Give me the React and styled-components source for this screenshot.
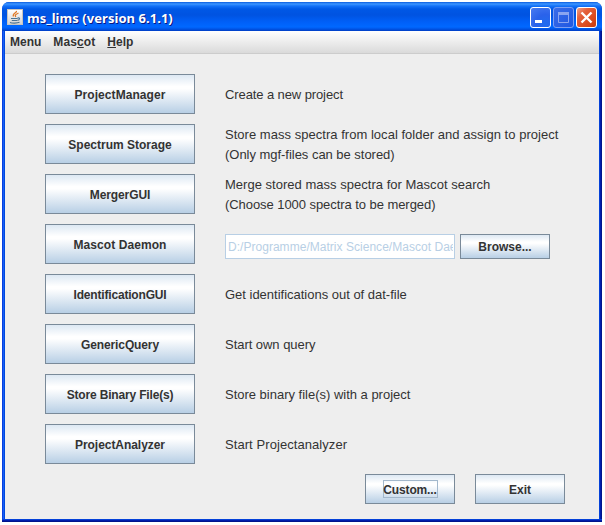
import React from "react";
import styled, { createGlobalStyle } from "styled-components";

const Global = createGlobalStyle`
  * { box-sizing: border-box; }
  body { margin: 0; background: #fff; overflow: hidden; }
`;

const Frame = styled.main`
  width: 600px;
  height: 520px;
  margin: 2px;
  display: flex;
  flex-direction: column;
  padding: 0 3px 3px;
  border-radius: 7px 7px 0 0;
  overflow: hidden;
  background:
    linear-gradient(to bottom, #0441d8 0 1px, #001dab 1px 2px, #00138c 2px) bottom / 100% 3px no-repeat,
    linear-gradient(to right, #0a3fe0 0 1px, #1660f5 1px 2px, #0048e0 2px) left / 3px 100% no-repeat,
    linear-gradient(to right, #0441d8 0 1px, #001dab 1px 2px, #00138c 2px) right / 3px 100% no-repeat,
    #0054e3;
`;

const TitleBar = styled.header`
  height: 29px;
  flex: none;
  margin: 0 -3px;
  padding: 1px 5px 0 5px;
  display: flex;
  align-items: center;
  background: linear-gradient(to bottom, #0a5ce0 0, #3d95ff 2px, #1472f8 4px, #0058e6 7px, #0053e1 13px, #0060f8 20px, #0068ff 25px, #0055e6 27px, #003dc4 29px);
`;

const Title = styled.h1`
  flex: 1;
  margin: 2px 0 0 4px;
  font: bold 13px/20px "Noto Sans", "Open Sans", sans-serif;
  letter-spacing: ${(p) => p.$track}px;
  color: #fff;
  text-shadow: 1px 1px 0 #0a1883;
  white-space: nowrap;
`;

const Controls = styled.div`
  display: flex;
  gap: 2px;
  padding-top: 1px;
`;

const tones = {
  blue: "radial-gradient(circle at 75% 85%, #1f6cf0 0, #2a62ea 45%, #4a7cf0 100%)",
  dim: "linear-gradient(135deg, #3a6ce8, #1f58e2)",
  red: "linear-gradient(135deg, #f0a088 0, #e4613c 30%, #dc4a1c 70%, #c43c10 100%)",
};

const ControlButton = styled.button`
  width: 21px;
  height: 21px;
  padding: 0;
  border: 1px solid ${(p) => (p.$tone === "dim" ? "#7d9ff2" : "#fff")};
  border-radius: 3px;
  background: ${(p) => tones[p.$tone]};
  svg { display: block; }
`;

const MenuBar = styled.nav`
  height: 23px;
  flex: none;
  display: flex;
  gap: 12px;
  padding-left: 5px;
  border-bottom: 1px solid #ccc;
  background: linear-gradient(to bottom, #fff, #dadada);
`;

const MenuItem = styled.span`
  font: bold 12px/22px "Liberation Sans", Arial, sans-serif;
  letter-spacing: ${(p) => p.$track || 0}px;
  color: #333;
  u { text-underline-offset: 1px; text-decoration-thickness: 1px; }
`;

const Content = styled.section`
  flex: 1;
  display: flex;
  flex-direction: column;
  padding: 20px 34px 15px 40px;
  background: #eee;
`;

const Actions = styled.div`
  display: grid;
  grid-auto-rows: 40px;
  gap: 10px;
`;

const Row = styled.div`
  display: flex;
  align-items: center;
  gap: 30px;
`;

const SwingButton = styled.button`
  flex: none;
  width: ${(p) => p.$w}px;
  height: ${(p) => p.$h}px;
  padding: ${(p) => (p.$h === 25 ? 0 : 2)}px 0 0;
  display: flex;
  align-items: center;
  justify-content: center;
  border: 1px solid #7a8a99;
  border-radius: 0;
  background: linear-gradient(to bottom, #dde8f3 0, #fff 30%, #fff 36%, #b8cfe5 100%);
  font: bold 12px/14px "Liberation Sans", Arial, sans-serif;
  letter-spacing: ${(p) => p.$track || 0}px;
  color: #333;
  white-space: nowrap;
`;

const FocusRing = styled.span`
  width: 55px;
  height: 18px;
  margin-top: -2px;
  line-height: 18px;
  border: 1px solid #a3b8cc;
  display: flex;
  justify-content: center;
  letter-spacing: -0.15px;
`;

const Description = styled.div`
  display: flex;
  flex-direction: column;
`;

const Line = styled.span`
  height: 20px;
  font: 13px/21px "Liberation Sans", Arial, sans-serif;
  letter-spacing: ${(p) => p.$track || 0}px;
  color: #333;
  white-space: nowrap;
`;

const PathGroup = styled.div`
  display: flex;
  gap: 5px;
  margin-top: 5px;
`;

const PathField = styled.div`
  width: 230px;
  height: 25px;
  padding: 0 1px 0 2px;
  border: 1px solid #b8cfe5;
  background: #fff;
`;

const PathText = styled.div`
  overflow: hidden;
  white-space: nowrap;
  font: 12px/24px "Liberation Sans", Arial, sans-serif;
  letter-spacing: ${(p) => p.$track || 0}px;
  color: #b8cfe5;
`;

const Footer = styled.footer`
  margin-top: auto;
  display: flex;
  justify-content: flex-end;
  gap: 20px;
`;

const rows = [
  { label: "ProjectManager", track: 0.07, lines: [["Create a new project", -0.1]] },
  { label: "Spectrum Storage", track: 0, lines: [["Store mass spectra from local folder and assign to project", 0.03], ["(Only mgf-files can be stored)", -0.03]] },
  { label: "MergerGUI", track: -0.1, lines: [["Merge stored mass spectra for Mascot search", 0.02], ["(Choose 1000 spectra to be merged)", -0.06]] },
  { label: "Mascot Daemon", track: 0.08, path: "D:/Programme/Matrix Science/Mascot Dae" },
  { label: "IdentificationGUI", track: -0.18, lines: [["Get identifications out of dat-file", -0.01]] },
  { label: "GenericQuery", track: -0.12, lines: [["Start own query", -0.04]] },
  { label: "Store Binary File(s)", track: -0.17, lines: [["Store binary file(s) with a project", -0.01]] },
  { label: "ProjectAnalyzer", track: -0.05, lines: [["Start Projectanalyzer", 0.07]] },
];

const JavaIcon = () => (
  <svg width="16" height="16" viewBox="0 0 16 16">
    <defs>
      <linearGradient id="tile" x2="0" y2="1">
        <stop offset="0" stopColor="#fff" />
        <stop offset="1" stopColor="#d2d2d2" />
      </linearGradient>
    </defs>
    <rect x="0.5" y="0.5" width="15" height="15" fill="url(#tile)" stroke="#c9c5bd" />
    <path d="M9.500 1.800C10 4 5 4.500 6.500 7.500M11.500 4C8.500 5.500 7.500 6 8.800 8" fill="none" stroke="#e07a28" strokeWidth="1.300" />
    <path d="M4 9.500h6.500M4.800 11.500h5.200M10.500 9c3-.7 2.500 2-.2 2.400M3 13.500c2 .8 7 .8 9.500-.2" fill="none" stroke="#4d7392" strokeWidth="1.200" />
  </svg>
);

const MinimizeIcon = () => (
  <svg width="19" height="19" viewBox="0 0 19 19"><path d="M4 12h7v3H4z" fill="#fff" /></svg>
);
const MaximizeIcon = () => (
  <svg width="19" height="19" viewBox="0 0 19 19">
    <path d="M4.500 5v9.500h10V5" fill="none" stroke="#8aa5f0" /><path d="M4 4h11v3H4z" fill="#8aa5f0" />
  </svg>
);
const CloseIcon = () => (
  <svg width="19" height="19" viewBox="0 0 19 19"><path d="M4.500 4.500l10 10M14.500 4.500l-10 10" stroke="#fff" strokeWidth="2.400" /></svg>
);

export default function App() {
  return (
    <>
      <Global />
      <Frame>
        <TitleBar>
          <JavaIcon />
          <Title $track={0.05}>ms_lims (version 6.1.1)</Title>
          <Controls>
            <ControlButton $tone="blue" aria-label="Minimize"><MinimizeIcon /></ControlButton>
            <ControlButton $tone="dim" aria-label="Maximize"><MaximizeIcon /></ControlButton>
            <ControlButton $tone="red" aria-label="Close"><CloseIcon /></ControlButton>
          </Controls>
        </TitleBar>
        <MenuBar>
          <MenuItem>Menu</MenuItem>
          <MenuItem $track={0.1}>Mas<u>c</u>ot</MenuItem>
          <MenuItem><u>H</u>elp</MenuItem>
        </MenuBar>
        <Content>
          <Actions>
            {rows.map((r) => (
              <Row key={r.label}>
                <SwingButton $w={150} $h={40} $track={r.track}>{r.label}</SwingButton>
                {r.path ? (
                  <PathGroup>
                    <PathField><PathText $track={0.03}>{r.path}</PathText></PathField>
                    <SwingButton $w={90} $h={25}>Browse...</SwingButton>
                  </PathGroup>
                ) : (
                  <Description>
                    {r.lines.map(([text, track]) => <Line key={text} $track={track}>{text}</Line>)}
                  </Description>
                )}
              </Row>
            ))}
          </Actions>
          <Footer>
            <SwingButton $w={90} $h={30}><FocusRing>Custom...</FocusRing></SwingButton>
            <SwingButton $w={90} $h={30}>Exit</SwingButton>
          </Footer>
        </Content>
      </Frame>
    </>
  );
}
